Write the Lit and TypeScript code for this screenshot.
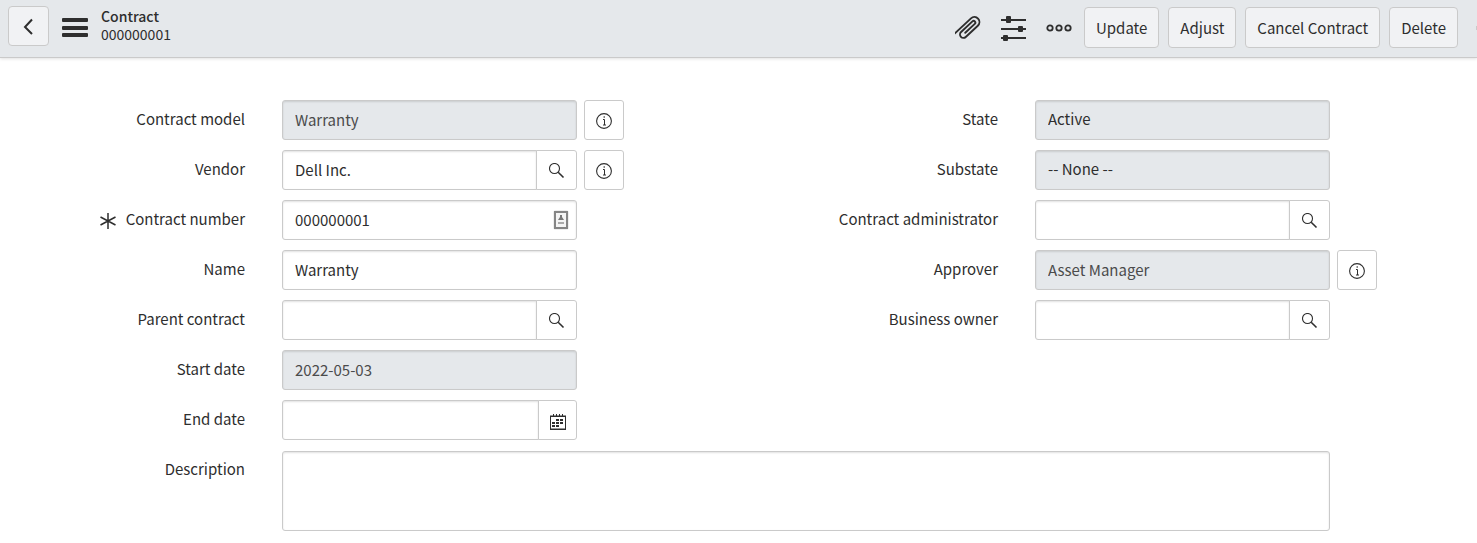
import { LitElement, html, css, svg, nothing } from "lit";
import { customElement, property } from "lit/decorators.js";

const icons = {
  back: svg`<svg width="20" height="20" viewBox="0 0 20 20" fill="none" stroke="currentColor" stroke-width="2"><path d="M13 3.500 6 11l7 7"/></svg>`,
  menu: svg`<svg width="26" height="20" viewBox="0 0 26 20" fill="currentColor"><rect x="0" y="1" width="26" height="4" rx="1"/><rect x="0" y="9" width="26" height="4" rx="1"/><rect x="0" y="16" width="26" height="4" rx="1"/></svg>`,
  clip: svg`<svg width="26" height="26" viewBox="0 0 26 26" fill="none" stroke="currentColor" stroke-width="1.900" stroke-linecap="round"><path transform="translate(13 13) rotate(-43) translate(-13.250 -5)" d="M0 0H22a5 5 0 0 1 0 10H5.500a3.400 3.400 0 0 1 0-6.800H21a1.700 1.700 0 0 1 0 3.400H8"/></svg>`,
  sliders: svg`<svg width="25" height="26" viewBox="0 0 25 26" fill="currentColor"><path d="M0 4h25v2H0zM0 13h25v2H0zM0 22h25v2H0z"/><rect x="5" y="1" width="5" height="7" rx="1"/><rect x="17" y="11" width="5" height="6" rx="1"/><rect x="2" y="20" width="5" height="6" rx="1"/></svg>`,
  more: svg`<svg width="26" height="8" viewBox="0 0 26 8" fill="none" stroke="currentColor" stroke-width="1.800"><circle cx="4" cy="4" r="2.700"/><circle cx="13" cy="4" r="2.700"/><circle cx="22" cy="4" r="2.700"/></svg>`,
  search: svg`<svg width="16" height="16" viewBox="0 0 16 16" fill="none" stroke="currentColor"><circle cx="5.500" cy="5.500" r="5" stroke-width="1.100"/><path d="m9.200 9.200 5.300 5.300" stroke-width="1.600"/></svg>`,
  info: svg`<svg width="16" height="16" viewBox="0 0 16 16" fill="none" stroke="currentColor"><circle cx="8" cy="8" r="7.400" stroke-width="1.100"/><path d="M7 6.500h1.500V12M7 12h3" stroke-width="1"/><circle cx="8.200" cy="4" r=".8" fill="currentColor" stroke="none"/></svg>`,
  calendar: svg`<svg width="16" height="16" viewBox="0 0 16 16"><path d="M.5 2v13.500h15V2" fill="none" stroke="currentColor"/><path d="M0 1.500h16V3H0zM0 14.500h16V16H0zM3 0h1v3H3zM6 0h1v3H6zM9 0h1v3H9zM12 0h1v3h-1zM6 5h3v2H6zM10 5h3v2h-3zM2 8h3v2H2zM6 8h3v2H6zM10 8h3v2h-3zM2 11h3v2H2zM6 11h3v2H6z" fill="currentColor"/></svg>`,
  star: svg`<svg width="16" height="20" viewBox="0 0 16 20" fill="none" stroke="currentColor" stroke-width="1.500"><path d="M8 4v16M.5 8l15 8M15.500 8l-15 8"/></svg>`,
  card: svg`<svg width="16" height="20" viewBox="0 0 16 20"><rect x=".5" y=".5" width="15" height="19" rx="1.500" fill="#ddd"/><rect x="2" y="2" width="12" height="16" fill="#f4f4f4" stroke="#858585" stroke-width="2"/><path d="M7 5h2v2l2 3H5l2-3z" fill="#777"/><path d="M5 12h6v2H5z" fill="#aaa"/></svg>`,
};

const shared = css`
  :host { display: block; }
  *, *::before, *::after { box-sizing: border-box; }
  button, input, textarea, select { margin: 0; font: inherit; color: inherit; }
  svg { display: block; flex: none; }
`;

@customElement("record-header")
class RecordHeader extends LitElement {
  static styles = [shared, css`
    .bar { display: flex; align-items: flex-start; height: 58px; padding: 6px 0 0 8px; background: #e5e8eb; border-bottom: 1px solid #cacaca; box-shadow: 0 1px 3px rgba(0, 0, 0, .12); }
    .button { height: 41px; padding: 0 11px; border: 1px solid #cacaca; border-radius: 4px; background: #f1f2f4; white-space: nowrap; }
    .back { display: flex; align-items: center; justify-content: center; width: 41px; height: 40px; padding: 0; }
    .icon { display: flex; align-items: center; justify-content: center; height: 44px; padding: 0; border: 0; background: none; }
    .menu { height: 42px; margin: 0 13px; }
    .title { flex: 1; margin: 0; padding-top: 1px; font-size: 14px; line-height: 18px; font-weight: 500; }
    .kind { display: block; }
    .number { display: block; font-weight: 400; }
    .tools { display: flex; gap: 20px; margin-right: 12px; }
    .actions { display: flex; gap: 9px; padding-top: 1px; }
    .edge { width: 1px; height: 4px; margin: 20px 0 0 18px; background: #cacaca; }
  `];

  render() {
    return html`
      <header class="bar">
        <button class="button back" aria-label="Back">${icons.back}</button>
        <button class="icon menu" aria-label="Menu">${icons.menu}</button>
        <h1 class="title"><span class="kind">Contract</span><span class="number">000000001</span></h1>
        <div class="tools">
          <button class="icon" aria-label="Attachments">${icons.clip}</button>
          <button class="icon" aria-label="Personalize form">${icons.sliders}</button>
          <button class="icon" aria-label="More options">${icons.more}</button>
        </div>
        <div class="actions">
          ${["Update", "Adjust", "Cancel Contract", "Delete"].map((t) => html`<button class="button">${t}</button>`)}
        </div>
        <span class="edge"></span>
      </header>`;
  }
}

@customElement("form-field")
class FormField extends LitElement {
  @property() label = "";
  @property() value = "";
  @property() kind: "text" | "select" | "reference" | "date" | "area" = "text";
  @property({ type: Boolean }) locked = false;
  @property({ type: Boolean }) required = false;
  @property({ type: Boolean }) info = false;
  @property({ type: Boolean }) card = false;

  static styles = [shared, css`
    .row { display: grid; grid-template-columns: 163px minmax(0, 1fr) 40px; column-gap: 7px; }
    .label { display: flex; align-items: center; justify-content: flex-end; gap: 10px; height: 38px; white-space: nowrap; }
    .control { display: flex; position: relative; margin-left: 30px; }
    .input { flex: 1; min-width: 0; width: 100%; height: 40px; padding: 0 12px 2px; border: 1px solid #cacaca; border-radius: 3px; background: #fff; box-shadow: inset 0 1px 2px rgba(0, 0, 0, .12); outline: 0; appearance: none; opacity: 1; }
    .locked { background: #e5e8eb; }
    input.locked { color: #4b4b4b; }
    .joined { border-radius: 3px 0 0 3px; }
    .area { height: 80px; margin-top: 1px; padding: 8px 12px; resize: none; }
    .side { display: flex; align-items: center; justify-content: center; width: 40px; height: 40px; padding: 1px 0 0; border: 1px solid #cacaca; border-radius: 3px; background: #fff; }
    .addon { width: 41px; margin-left: -1px; border-radius: 0 3px 3px 0; }
    .date { width: 39px; padding-top: 3px; }
    .badge { position: absolute; right: 8px; top: 10px; }
  `];

  private renderInput() {
    const cls = `input ${this.locked ? "locked" : ""}`;
    switch (this.kind) {
      case "area":
        return html`<textarea id="field" class="input area"></textarea>`;
      case "select":
        return html`<select id="field" class=${cls} disabled><option>${this.value}</option></select>`;
      case "reference":
        return html`<input id="field" class="input joined" .value=${this.value}><button class="side addon" aria-label="Look up ${this.label}">${icons.search}</button>`;
      case "date":
        return html`<input id="field" class="input joined" .value=${this.value}><button class="side addon date" aria-label="Pick ${this.label}">${icons.calendar}</button>`;
      default:
        return html`<input id="field" class=${cls} .value=${this.value} ?readonly=${this.locked}>`;
    }
  }

  render() {
    return html`
      <div class="row">
        <label class="label" for="field">${this.required ? icons.star : nothing}<span>${this.label}</span></label>
        <div class="control">${this.renderInput()}${this.card ? html`<span class="badge">${icons.card}</span>` : nothing}</div>
        ${this.info ? html`<button class="side" aria-label="Preview ${this.label}">${icons.info}</button>` : nothing}
      </div>`;
  }
}

@customElement("app-root")
class AppRoot extends LitElement {
  static styles = [shared, css`
    :host { font-family: "Noto Sans CJK SC", "Noto Sans", sans-serif; font-size: 15px; line-height: 20px; color: #2e2e2e; background: #fff; }
    .form { display: grid; grid-template-columns: repeat(2, minmax(0, 1fr)); column-gap: 211px; row-gap: 10px; padding: 42px 100px 12px 82px; }
    .column { display: flex; flex-direction: column; gap: 10px; }
    .wide { grid-column: 1 / -1; }
  `];

  render() {
    return html`
      <record-header></record-header>
      <main class="form">
        <div class="column">
          <form-field label="Contract model" value="Warranty" locked info></form-field>
          <form-field label="Vendor" value="Dell Inc." kind="reference" info></form-field>
          <form-field label="Contract number" value="000000001" required card></form-field>
          <form-field label="Name" value="Warranty"></form-field>
          <form-field label="Parent contract" kind="reference"></form-field>
          <form-field label="Start date" value="2022-05-03" locked></form-field>
          <form-field label="End date" kind="date"></form-field>
        </div>
        <div class="column">
          <form-field label="State" value="Active" kind="select" locked></form-field>
          <form-field label="Substate" value="-- None --" kind="select" locked></form-field>
          <form-field label="Contract administrator" kind="reference"></form-field>
          <form-field label="Approver" value="Asset Manager" locked info></form-field>
          <form-field label="Business owner" kind="reference"></form-field>
        </div>
        <form-field class="wide" label="Description" kind="area"></form-field>
      </main>`;
  }
}
